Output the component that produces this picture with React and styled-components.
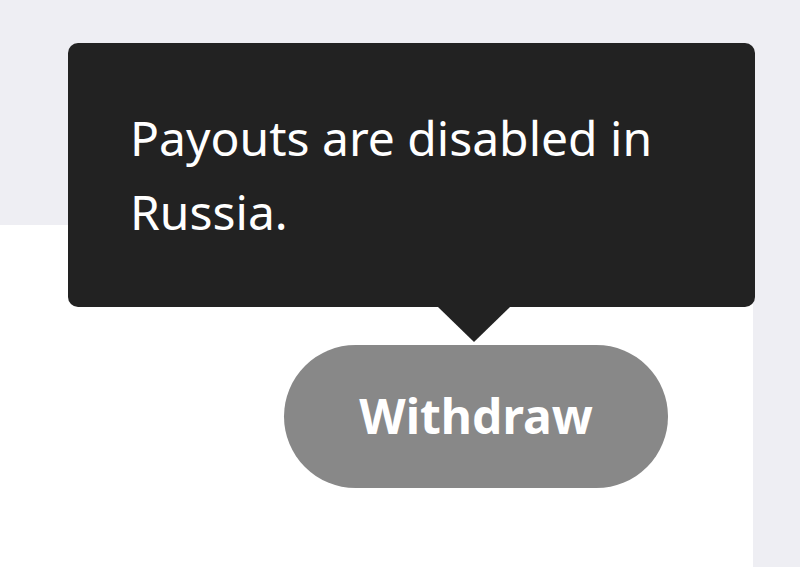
import styled, { createGlobalStyle } from "styled-components";

const GlobalStyle = createGlobalStyle`
    html, body {
        margin: 0;
        padding: 0;
        background: #eeeef3;
        font-family: "Noto Sans", "Open Sans", sans-serif;
    }
`;

const Page = styled.div`
    display: flex;
    flex-direction: column;
    width: 800px;
    height: 567px;
    overflow: hidden;
    background: #eeeef3;
`;

const TopBand = styled.div`
    height: 225px;
    flex-shrink: 0;
`;

const Panel = styled.div`
    flex: 1;
    width: 753px;
    background: #ffffff;
    padding: 120px 0 0 284px;
    box-sizing: border-box;
`;

const ButtonWrap = styled.div`
    position: relative;
    display: inline-block;
`;

const Button = styled.button`
    width: 384px;
    height: 143px;
    border: none;
    border-radius: 72px;
    background: #888888;
    color: #ffffff;
    font-family: "Noto Sans", "Open Sans", sans-serif;
    font-weight: 700;
    font-size: 48px;
    cursor: not-allowed;
    padding: 0 0 2px 0;
`;

const Tooltip = styled.div`
    position: absolute;
    left: -216px;
    bottom: calc(100% + 38px);
    width: 687px;
    height: 264px;
    box-sizing: border-box;
    padding: 58px 30px 0 62px;
    background: #222222;
    border-radius: 10px;
    color: #ffffff;
    font-size: 48px;
    line-height: 74px;

    &::after {
        content: "";
        position: absolute;
        top: 100%;
        left: 370px;
        border-left: 36px solid transparent;
        border-right: 36px solid transparent;
        border-top: 35px solid #222222;
    }
`;

const App = () => {
    return (
        <Page>
            <GlobalStyle />
            <TopBand />
            <Panel>
                <ButtonWrap>
                    <Tooltip>Payouts are disabled in Russia.</Tooltip>
                    <Button>Withdraw</Button>
                </ButtonWrap>
            </Panel>
        </Page>
    );
};

export default App;
